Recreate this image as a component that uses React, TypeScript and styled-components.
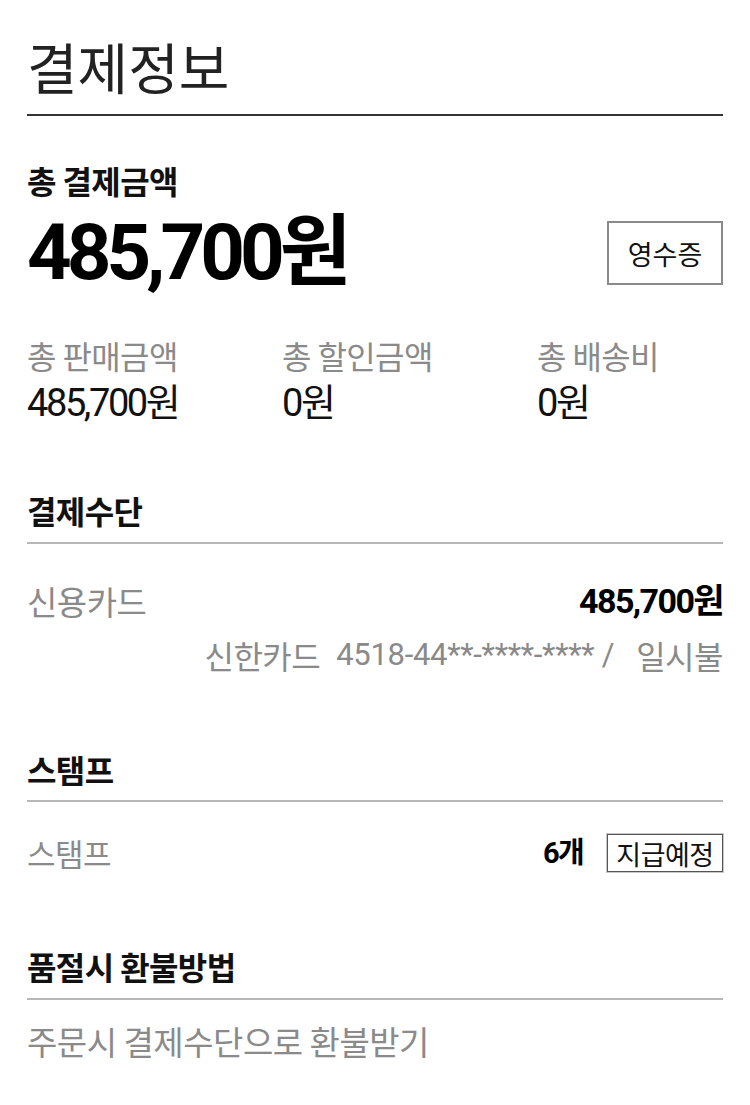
import { createGlobalStyle, styled } from "styled-components"

const GlobalStyle = createGlobalStyle`
    body {
        margin: 0;
        background: #ffffff;
        font-family: "Noto Sans CJK KR", "Noto Sans", sans-serif;
        color: #111111;
    }
`

const Page = styled.div`
    width: 696px;
    padding: 29px 27px 40px;
`

const Title = styled.h1`
    margin: 0;
    font-size: 55px;
    font-weight: 400;
    line-height: 72px;
    letter-spacing: 0;
    color: #222;
    padding-bottom: 13px;
    border-bottom: 2px solid #333;
`

const Section = styled.section<{ $top: number }>`
    margin-top: ${p => p.$top}px;
`

const Heading = styled.h2<{ $pad?: number }>`
    margin: 0;
    font-size: 32px;
    font-weight: 700;
    line-height: 40px;
    letter-spacing: -0.6px;
    color: #111;
    ${p => p.$pad !== undefined && `
        padding-bottom: ${p.$pad}px;
        border-bottom: 2px solid #b8b8b8;
    `}
`

const TotalRow = styled.div`
    display: flex;
    justify-content: space-between;
    align-items: center;
    margin-top: 13px;
`

const BigAmount = styled.div`
    font-family: "Roboto", "Noto Sans CJK KR", sans-serif;
    font-size: 78px;
    font-weight: 700;
    line-height: 80px;
    letter-spacing: -5px;
    color: #000;
`

const ReceiptButton = styled.button`
    box-sizing: border-box;
    width: 116px;
    height: 64px;
    padding: 0;
    background: #fff;
    border: 2px solid #8a8a8a;
    font-family: "Noto Sans CJK KR", sans-serif;
    font-size: 27px;
    letter-spacing: 0;
    color: #111;
`

const Summary = styled.div`
    display: grid;
    grid-template-columns: 255px 255px 1fr;
    margin-top: 42px;
`

const SummaryLabel = styled.div`
    font-size: 32px;
    line-height: 40px;
    color: #8a8a8a;
    letter-spacing: -0.6px;
`

const SummaryValue = styled.div`
    margin-top: 6px;
    font-family: "Roboto", "Noto Sans CJK KR", sans-serif;
    font-size: 38px;
    line-height: 44px;
    color: #111;
    letter-spacing: -2.4px;
`

const Row = styled.div<{ $top: number; $h?: number }>`
    display: flex;
    justify-content: space-between;
    align-items: center;
    height: ${p => p.$h ?? 44}px;
    margin-top: ${p => p.$top}px;
`

const Label = styled.div<{ $size?: number }>`
    font-size: ${p => p.$size ?? 33}px;
    line-height: 44px;
    color: #8a8a8a;
    letter-spacing: -0.5px;
`

const Amount = styled.div<{ $size?: number }>`
    font-family: "Roboto", "Noto Sans CJK KR", sans-serif;
    font-size: ${p => p.$size ?? 34}px;
    font-weight: 700;
    line-height: 44px;
    letter-spacing: -1.6px;
    color: #000;
`

const Detail = styled.div`
    display: flex;
    justify-content: flex-end;
    align-items: center;
    margin-top: 12px;
    font-size: 32px;
    line-height: 40px;
    color: #8a8a8a;
    letter-spacing: -0.5px;
`

const CardNumber = styled.span`
    margin: 0 22px 0 16px;
    font-family: "Roboto", sans-serif;
    font-size: 31px;
    letter-spacing: -0.3px;
`

const StampRight = styled.div`
    display: flex;
    align-items: center;
    gap: 24px;
`

const StatusTag = styled.span`
    box-sizing: border-box;
    display: inline-flex;
    align-items: center;
    justify-content: center;
    width: 116px;
    height: 38px;
    border: 1px solid #555;
    box-shadow: 0 0 0 1px #c8c8c8;
    font-size: 27px;
    letter-spacing: -0.5px;
    color: #111;
`

const summary = [
    { label: "총 판매금액", value: "485,700원" },
    { label: "총 할인금액", value: "0원" },
    { label: "총 배송비", value: "0원" },
]

export default function App() {
    return (
        <>
            <GlobalStyle />
            <Page>
                <Title>결제정보</Title>

                <Section $top={44}>
                    <Heading>총 결제금액</Heading>
                    <TotalRow>
                        <BigAmount>485,700원</BigAmount>
                        <ReceiptButton>영수증</ReceiptButton>
                    </TotalRow>
                    <Summary>
                        {summary.map(s => (
                            <div key={s.label}>
                                <SummaryLabel>{s.label}</SummaryLabel>
                                <SummaryValue>{s.value}</SummaryValue>
                            </div>
                        ))}
                    </Summary>
                </Section>

                <Section $top={65}>
                    <Heading $pad={12}>결제수단</Heading>
                    <Row $top={35}>
                        <Label>신용카드</Label>
                        <Amount>485,700원</Amount>
                    </Row>
                    <Detail>
                        <span>신한카드</span>
                        <CardNumber>4518-44**-****-**** /</CardNumber>
                        <span>일시불</span>
                    </Detail>
                </Section>

                <Section $top={74}>
                    <Heading $pad={11}>스탬프</Heading>
                    <Row $top={31} $h={40}>
                        <Label $size={31}>스탬프</Label>
                        <StampRight>
                            <Amount $size={29}>6개</Amount>
                            <StatusTag>지급예정</StatusTag>
                        </StampRight>
                    </Row>
                </Section>

                <Section $top={73}>
                    <Heading $pad={12}>품절시 환불방법</Heading>
                    <Row $top={19}>
                        <Label>주문시 결제수단으로 환불받기</Label>
                    </Row>
                </Section>
            </Page>
        </>
    )
}
